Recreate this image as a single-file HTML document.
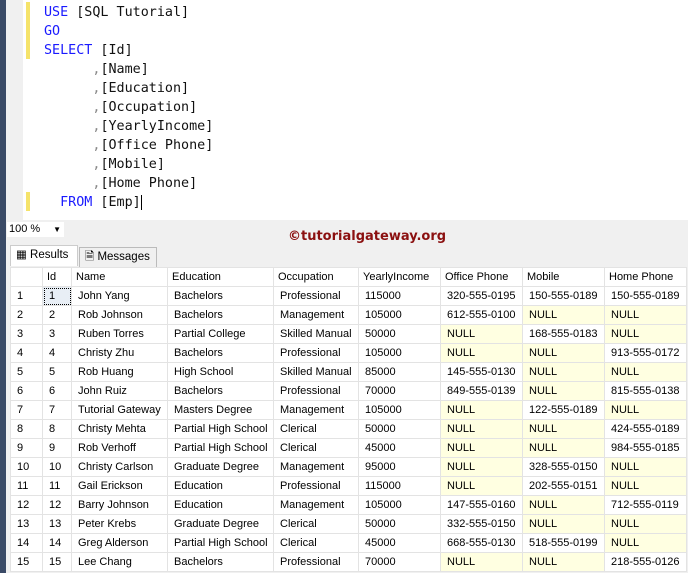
<!DOCTYPE html>
<html><head><style>
body{margin:0;width:688px;height:573px;overflow:hidden;background:#fff;position:relative;font-family:"Liberation Sans",sans-serif}
.strip{position:absolute;left:0;top:0;width:6px;height:573px;background:#3a4a66}
.gut{position:absolute;left:6px;top:0;width:17px;height:220px;background:#f0f0f0}
.mark{position:absolute;left:26px;width:4px;background:#f5e36a}
.code{position:absolute;left:44px;top:3px;font-family:"DejaVu Sans Mono","Liberation Mono",monospace;font-size:13.4px;line-height:19px;color:#111;white-space:pre}
.k{color:#1a1aff}.c{color:#888}
.grey{position:absolute;left:6px;top:220px;width:682px;height:353px;background:#f0f0f0}
.zoom{position:absolute;left:7px;top:222px;width:57px;height:15px;background:#fff;font-size:11px;line-height:15px;padding-left:2px;box-sizing:border-box}
.wm{position:absolute;left:288px;top:229px;font-weight:bold;font-size:13px;color:#8b1010;font-family:"DejaVu Sans",sans-serif}
.tab{position:absolute;top:245px;height:21px;font-size:11.5px;line-height:19px;box-sizing:border-box}
table{position:absolute;left:10px;top:267px;border-collapse:collapse;background:#fff;font-size:11px;table-layout:fixed}
td{height:18px;border:1px solid #e3e3e3;padding:0 0 0 6px;white-space:nowrap;overflow:hidden}
tr.h td{padding-left:4px}
.n{background:#ffffe1}
</style></head><body>
<div class="strip"></div><div class="gut"></div>
<div class="mark" style="top:2px;height:57px"></div>
<div class="mark" style="top:192px;height:19px"></div>
<div class="code"><span class="k">USE</span> [SQL Tutorial]
<span class="k">GO</span>
<span class="k">SELECT</span> [Id]
      <span class="c">,</span>[Name]
      <span class="c">,</span>[Education]
      <span class="c">,</span>[Occupation]
      <span class="c">,</span>[YearlyIncome]
      <span class="c">,</span>[Office Phone]
      <span class="c">,</span>[Mobile]
      <span class="c">,</span>[Home Phone]
  <span class="k">FROM</span> [Emp]<span style="border-left:1px solid #000"></span></div>
<div class="grey"></div>
<div class="zoom">100 % <span style="float:right;font-size:8px;margin-right:3px">▼</span></div>
<div class="wm">©tutorialgateway.org</div>
<div class="tab" style="left:10px;width:68px;background:#fff;border:1px solid #ccc;border-bottom:none;padding-left:5px">▦ Results</div>
<div class="tab" style="left:79px;width:78px;top:247px;border:1px solid #bbb;border-bottom:none;padding-left:5px">🗎 Messages</div>
<table>
<colgroup><col style="width:32px"><col style="width:29px"><col style="width:96px"><col style="width:106px"><col style="width:85px"><col style="width:82px"><col style="width:82px"><col style="width:82px"><col style="width:82px"></colgroup>
<tr class="h"><td></td><td>Id</td><td>Name</td><td>Education</td><td>Occupation</td><td>YearlyIncome</td><td>Office Phone</td><td>Mobile</td><td>Home Phone</td></tr>
<tr><td>1</td><td style="outline:1px dotted #000;outline-offset:-2px;background:#e8eef5">1</td><td>John Yang</td><td>Bachelors</td><td>Professional</td><td>115000</td><td>320-555-0195</td><td>150-555-0189</td><td>150-555-0189</td></tr>
<tr><td>2</td><td>2</td><td>Rob Johnson</td><td>Bachelors</td><td>Management</td><td>105000</td><td>612-555-0100</td><td class="n">NULL</td><td class="n">NULL</td></tr>
<tr><td>3</td><td>3</td><td>Ruben Torres</td><td>Partial College</td><td>Skilled Manual</td><td>50000</td><td class="n">NULL</td><td>168-555-0183</td><td class="n">NULL</td></tr>
<tr><td>4</td><td>4</td><td>Christy Zhu</td><td>Bachelors</td><td>Professional</td><td>105000</td><td class="n">NULL</td><td class="n">NULL</td><td>913-555-0172</td></tr>
<tr><td>5</td><td>5</td><td>Rob Huang</td><td>High School</td><td>Skilled Manual</td><td>85000</td><td>145-555-0130</td><td class="n">NULL</td><td class="n">NULL</td></tr>
<tr><td>6</td><td>6</td><td>John Ruiz</td><td>Bachelors</td><td>Professional</td><td>70000</td><td>849-555-0139</td><td class="n">NULL</td><td>815-555-0138</td></tr>
<tr><td>7</td><td>7</td><td>Tutorial Gateway</td><td>Masters Degree</td><td>Management</td><td>105000</td><td class="n">NULL</td><td>122-555-0189</td><td class="n">NULL</td></tr>
<tr><td>8</td><td>8</td><td>Christy Mehta</td><td>Partial High School</td><td>Clerical</td><td>50000</td><td class="n">NULL</td><td class="n">NULL</td><td>424-555-0189</td></tr>
<tr><td>9</td><td>9</td><td>Rob Verhoff</td><td>Partial High School</td><td>Clerical</td><td>45000</td><td class="n">NULL</td><td class="n">NULL</td><td>984-555-0185</td></tr>
<tr><td>10</td><td>10</td><td>Christy Carlson</td><td>Graduate Degree</td><td>Management</td><td>95000</td><td class="n">NULL</td><td>328-555-0150</td><td class="n">NULL</td></tr>
<tr><td>11</td><td>11</td><td>Gail Erickson</td><td>Education</td><td>Professional</td><td>115000</td><td class="n">NULL</td><td>202-555-0151</td><td class="n">NULL</td></tr>
<tr><td>12</td><td>12</td><td>Barry Johnson</td><td>Education</td><td>Management</td><td>105000</td><td>147-555-0160</td><td class="n">NULL</td><td>712-555-0119</td></tr>
<tr><td>13</td><td>13</td><td>Peter Krebs</td><td>Graduate Degree</td><td>Clerical</td><td>50000</td><td>332-555-0150</td><td class="n">NULL</td><td class="n">NULL</td></tr>
<tr><td>14</td><td>14</td><td>Greg Alderson</td><td>Partial High School</td><td>Clerical</td><td>45000</td><td>668-555-0130</td><td>518-555-0199</td><td class="n">NULL</td></tr>
<tr><td>15</td><td>15</td><td>Lee Chang</td><td>Bachelors</td><td>Professional</td><td>70000</td><td class="n">NULL</td><td class="n">NULL</td><td>218-555-0126</td></tr>
</table>
</body></html>
